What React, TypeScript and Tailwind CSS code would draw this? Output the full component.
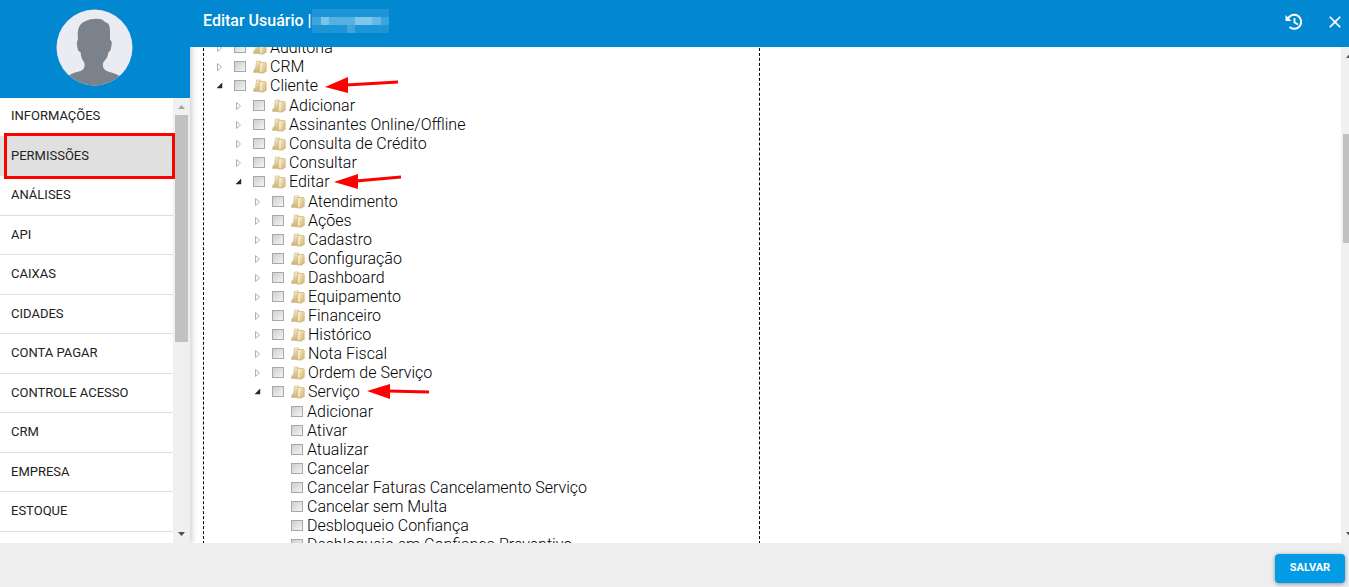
import React from 'react';
import { MdClose } from 'react-icons/md';

type TreeItem = {
  label: string;
  leaf?: boolean;
  arrow?: React.ReactNode;
  children?: TreeItem[];
};

const menu = [
  'INFORMAÇÕES',
  'PERMISSÕES',
  'ANÁLISES',
  'API',
  'CAIXAS',
  'CIDADES',
  'CONTA PAGAR',
  'CONTROLE ACESSO',
  'CRM',
  'EMPRESA',
  'ESTOQUE',
];

const names = (...labels: string[]): TreeItem[] => labels.map((label) => ({ label }));

const Arrow = ({ points, line }: { points: string; line: string }) => (
  <svg className="ml-1 h-5 w-20 shrink-0" viewBox="0 0 80 20" fill="none" aria-hidden="true">
    <path d={line} stroke="#fe0000" strokeWidth="3" />
    <polygon points={points} fill="#fe0000" />
  </svg>
);

const tree: TreeItem[] = [
  { label: 'Auditoria' },
  { label: 'CRM' },
  {
    label: 'Cliente',
    arrow: <Arrow points="3,11 26,1 26,17" line="M24 9 L76 6" />,
    children: [
      ...names('Adicionar', 'Assinantes Online/Offline', 'Consulta de Crédito', 'Consultar'),
      {
        label: 'Editar',
        arrow: <Arrow points="0,10 24,2 24,17" line="M22 9 L67 5" />,
        children: [
          ...names(
            'Atendimento',
            'Ações',
            'Cadastro',
            'Configuração',
            'Dashboard',
            'Equipamento',
            'Financeiro',
            'Histórico',
            'Nota Fiscal',
            'Ordem de Serviço',
          ),
          {
            label: 'Serviço',
            arrow: <Arrow points="3,9 26,2 26,17" line="M24 9 L65 10" />,
            children: names(
              'Adicionar',
              'Ativar',
              'Atualizar',
              'Cancelar',
              'Cancelar Faturas Cancelamento Serviço',
              'Cancelar sem Multa',
              'Desbloqueio Confiança',
              'Desbloqueio em Confiança Preventivo',
            ).map((item) => ({ ...item, leaf: true })),
          },
        ],
      },
    ],
  },
];

const FolderIcon = () => (
  <svg className="ml-1.5 h-4 w-4 shrink-0" viewBox="0 0 16 16" aria-hidden="true">
    <defs>
      <linearGradient id="front" x1="0" y1="0" x2="1" y2="1">
        <stop offset="0" stopColor="#fbf1d2" />
        <stop offset="1" stopColor="#d3b470" />
      </linearGradient>
      <linearGradient id="back" x1="0" y1="0" x2="0" y2="1">
        <stop offset="0" stopColor="#f8ecc6" />
        <stop offset="1" stopColor="#cdb076" />
      </linearGradient>
    </defs>
    <path d="M4.500 2h4l.5 1v10.500H1.500l.5-3 1.500-1z" fill="url(#back)" stroke="#cdb887" strokeWidth="0.6" />
    <path d="M7.500 3.500h6l.7.7v8.300h-1.500l-.5 1.500H7z" fill="url(#front)" stroke="#c5a766" strokeWidth="0.6" />
    <path d="M9 4.200v8.500" stroke="#fffaf0" strokeWidth="0.8" />
  </svg>
);

const Toggle = ({ open }: { open: boolean }) => (
  <button type="button" className="flex h-4 w-4 items-center justify-center" aria-label={open ? 'Recolher' : 'Expandir'}>
    <svg className="h-4 w-4" viewBox="0 0 16 16" aria-hidden="true">
      {open ? (
        <path d="M10 5v5H5z" fill="#2b2b2b" stroke="#2b2b2b" strokeWidth="0.5" />
      ) : (
        <path d="M5.500 4.500v7l4-3.500z" fill="#fff" stroke="#b0b0b0" />
      )}
    </svg>
  </button>
);

const TreeNode = ({ item }: { item: TreeItem }) => (
  <li>
    <div className="flex h-[19px] items-center whitespace-nowrap">
      {item.leaf ? <span className="w-4" /> : <Toggle open={!!item.children} />}
      <label className="flex items-center">
        <input
          type="checkbox"
          className="ml-1.5 h-[11px] w-3 shrink-0 appearance-none border border-[#a8a8a8] bg-linear-to-br from-[#cfcfcf] to-[#f4f4f4]"
        />
        {!item.leaf && <FolderIcon />}
        <span className={item.leaf ? 'ml-1' : 'ml-0.5'}>{item.label}</span>
      </label>
      {item.arrow}
    </div>
    {item.children && (
      <ul className="pt-px pl-[19px]">
        {item.children.map((child) => (
          <TreeNode key={child.label} item={child} />
        ))}
      </ul>
    )}
  </li>
);

const Avatar = () => (
  <svg className="h-[77px] w-[77px]" viewBox="0 0 77 77" role="img" aria-label="Usuário">
    <defs>
      <clipPath id="avatar">
        <circle cx="38.5" cy="38.5" r="38" />
      </clipPath>
    </defs>
    <g clipPath="url(#avatar)">
      <rect width="77" height="77" fill="#ebecf1" />
      <path
        d="M38 10c5-1 9 0 11 3 4 1 5 4 5 9v9c2 1 2 3 1.500 5-.5 4-1 7-3 7-.5 5-3 8-5 10-.8 2-.8 4 0 6 1 2 3 3 6 4 5 1 9 3 13 6v18H8V70c5-4 8-6 13-7 4-1 6-2 7-4 .8-2 .8-4 0-6-2-2-3-5-3.500-10-2 0-3-3-3.500-7-.3-3 0-4 1-5-.6-7-.6-12 3-16 3-3 8-5 13-5z"
        fill="#7b828b"
      />
    </g>
  </svg>
);

export default function App() {
  return (
    <div className="flex h-screen flex-col overflow-hidden bg-white font-[Roboto,sans-serif] text-[#222]">
      <div className="flex min-h-0 flex-1">
        <aside className="z-10 flex w-[190px] shrink-0 flex-col bg-white shadow-[2px_0_6px_rgba(0,0,0,0.2)]">
          <div className="flex h-[98px] shrink-0 justify-center bg-[#0288d1] pt-[9px] pr-0.5">
            <Avatar />
          </div>
          <div className="flex min-h-0 flex-1 overflow-hidden">
            <nav className="z-10 min-w-0 flex-1">
              <ul className="-mt-px text-[13px] leading-normal">
                {menu.map((label) => {
                  const active = label === 'PERMISSÕES';
                  return (
                    <li key={label} className="relative border-b border-[#dedede]">
                      <a href="#" className={`block pt-[9px] pb-2.5 pl-[11px] ${active ? 'bg-[#e0e0e0]' : ''}`}>
                        {label}
                      </a>
                      {active && <span className="absolute -top-1 -right-0.5 -bottom-1 left-1 border-3 border-[#fe0000]" />}
                    </li>
                  );
                })}
              </ul>
            </nav>
            <div className="flex w-[17px] flex-col items-center bg-[#f0f0f0]">
              <svg className="h-[17px] w-[17px] shrink-0" viewBox="0 0 17 17" aria-hidden="true">
                <path d="M5 11h7L8.500 7z" fill="#a3a3a3" />
              </svg>
              <div className="h-[227px] w-[13px] bg-[#c1c1c1]" />
              <svg className="mt-auto h-[17px] w-[17px] shrink-0" viewBox="0 0 17 17" aria-hidden="true">
                <path d="M5 6h7l-3.500 4z" fill="#505050" />
              </svg>
            </div>
          </div>
        </aside>

        <div className="flex min-w-0 flex-1 flex-col">
          <header className="z-20 flex h-[47px] shrink-0 items-center bg-[#0288d1] pr-1 pb-1 pl-[13px] text-white">
            <h1 className="pb-0.5 text-base font-medium">Editar Usuário |</h1>
            <svg className="mb-0.5 h-6 w-[77px]" viewBox="0 0 77 24" aria-hidden="true">
              <rect width="77" height="24" fill="#1c94d5" />
              <rect y="8" width="77" height="8" fill="#3ba5dc" />
              <rect x="9" y="8" width="8" height="8" fill="#7bc4e9" />
              <rect x="17" y="8" width="26" height="8" fill="#55b1e1" />
              <rect x="43" y="8" width="17" height="8" fill="#80c6ea" />
              <rect x="60" y="8" width="9" height="8" fill="#66b9e4" />
              <rect x="35" y="16" width="8" height="8" fill="#3ba5dc" />
            </svg>
            <button type="button" className="ml-auto" aria-label="Histórico">
              <svg className="h-[18px] w-[18px]" viewBox="0 0 18 18" fill="none" stroke="#fff" strokeWidth="2" aria-hidden="true">
                <path d="M3 5.500A7 7 0 1 1 4.500 14" />
                <path d="M9.500 5v4.500l3.500 2" strokeWidth="1.800" />
                <path d="M.5 2v6h6z" fill="#fff" stroke="none" />
              </svg>
            </button>
            <button type="button" className="ml-[22px]" aria-label="Fechar">
              <MdClose className="h-5 w-5" />
            </button>
          </header>

          <div className="flex min-h-0 flex-1">
            <main className="min-w-0 flex-1 overflow-hidden pl-[13px]">
              <div className="min-h-full w-[557px] border-x border-dashed border-black pl-2">
                <ul className="-mt-[9px] text-base leading-[19px] font-light text-black">
                  {tree.map((item) => (
                    <TreeNode key={item.label} item={item} />
                  ))}
                </ul>
              </div>
            </main>
            <div className="flex w-2 flex-col overflow-hidden bg-[#f0f0f0] pl-0.5">
              <svg className="h-[17px] w-[13px] shrink-0" viewBox="2 0 13 17" aria-hidden="true">
                <path d="M5 11h7L8.500 7z" fill="#505050" />
              </svg>
              <div className="mt-[70px] h-[109px] w-[13px] shrink-0 bg-[#c1c1c1]" />
              <svg className="mt-auto h-[17px] w-[13px] shrink-0" viewBox="2 0 13 17" aria-hidden="true">
                <path d="M5 6h7l-3.500 4z" fill="#505050" />
              </svg>
            </div>
          </div>
        </div>
      </div>

      <footer className="z-20 flex h-11 shrink-0 items-end justify-end bg-[#eee] px-1 pb-1">
        <button
          type="button"
          className="h-[29px] min-w-[70px] rounded-sm bg-[#039be5] px-3.5 text-[11px] font-bold text-white shadow-[0_1px_4px_rgba(0,0,0,0.4)]"
        >
          SALVAR
        </button>
      </footer>
    </div>
  );
}
